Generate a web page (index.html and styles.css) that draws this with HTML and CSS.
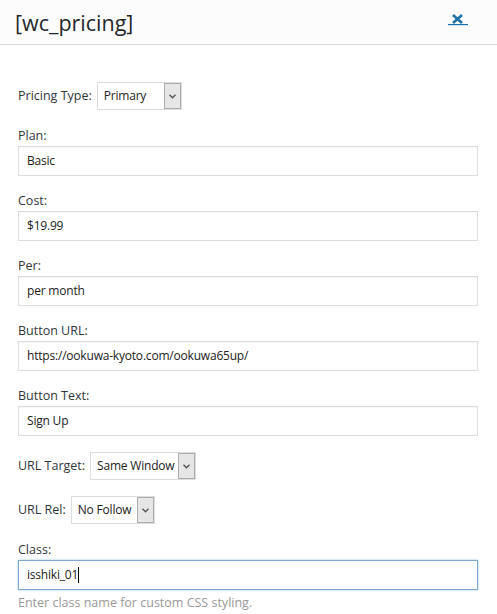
FILE: index.html
```html
<!DOCTYPE html>
<html lang="en">
<head>
<meta charset="utf-8">
<title>[wc_pricing]</title>
<link rel="stylesheet" href="styles.css">
</head>
<body>
<div class="dialog">
  <header class="dialog-header">
    <h1 class="dialog-title">[wc_pricing]</h1>
    <a class="close" href="#" aria-label="Close">
      <svg width="20" height="12" viewBox="0 0 20 12"><path d="M5 1 L14 9 M14 1 L5 9" stroke="#1f6fa8" stroke-width="2.6" fill="none"/><rect x="0" y="10" width="20" height="1.2" fill="#1f6fa8"/></svg>
    </a>
  </header>
  <form class="form">
    <div class="row-inline row-first">
      <label class="inline-label">Pricing Type:</label>
      <div class="select sel-type">
        <span class="select-value">Primary</span>
        <span class="select-arrow"><svg width="7" height="5" viewBox="0 0 7 5"><path d="M0.5 0.8 L3.5 3.8 L6.5 0.8" stroke="#555" stroke-width="1.4" fill="none"/></svg></span>
      </div>
    </div>
    <div class="field">
      <label class="label">Plan:</label>
      <div class="input">Basic</div>
    </div>
    <div class="field">
      <label class="label">Cost:</label>
      <div class="input">$19.99</div>
    </div>
    <div class="field">
      <label class="label">Per:</label>
      <div class="input">per month</div>
    </div>
    <div class="field">
      <label class="label">Button URL:</label>
      <div class="input">https://ookuwa-kyoto.com/ookuwa65up/</div>
    </div>
    <div class="field">
      <label class="label">Button Text:</label>
      <div class="input">Sign Up</div>
    </div>
    <div class="row-inline">
      <label class="inline-label">URL Target:</label>
      <div class="select sel-target">
        <span class="select-value">Same Window</span>
        <span class="select-arrow"><svg width="7" height="5" viewBox="0 0 7 5"><path d="M0.5 0.8 L3.5 3.8 L6.5 0.8" stroke="#555" stroke-width="1.4" fill="none"/></svg></span>
      </div>
    </div>
    <div class="row-inline row-rel">
      <label class="inline-label">URL Rel:</label>
      <div class="select sel-rel">
        <span class="select-value">No Follow</span>
        <span class="select-arrow"><svg width="7" height="5" viewBox="0 0 7 5"><path d="M0.5 0.8 L3.5 3.8 L6.5 0.8" stroke="#555" stroke-width="1.4" fill="none"/></svg></span>
      </div>
    </div>
    <div class="field field-last">
      <label class="label">Class:</label>
      <div class="input input-focus">isshiki_01<span class="caret"></span></div>
      <p class="help">Enter class name for custom CSS styling.</p>
    </div>
  </form>
</div>
</body>
</html>
```
FILE: styles.css
```css
html, body {
  margin: 0;
  padding: 0;
  background: #ffffff;
}
body {
  font-family: "Open Sans", "Noto Sans", sans-serif;
  font-size: 12.5px;
  color: #32373c;
  width: 497px;
  height: 614px;
  overflow: hidden;
}
.dialog-header {
  height: 44px;
  background: #fcfcfc;
  border-bottom: 1px solid #dddddd;
  box-shadow: 0 1px 2px rgba(0,0,0,0.04);
  display: flex;
  align-items: center;
  justify-content: space-between;
  padding: 0 29px 0 15px;
}
.dialog-title {
  margin: 0;
  font-size: 21.5px;
  font-weight: 400;
  color: #23282d;
  line-height: 28px;
  position: relative;
  top: 1px;
}
.close {
  display: block;
  width: 20px;
  height: 12px;
  margin-top: -4px;
}
.close svg { display: block; }
.form {
  padding: 37px 19px 0 18px;
}
.row-inline {
  display: flex;
  align-items: center;
  gap: 5px;
  height: 28px;
  margin-bottom: 17px;
}
.row-rel {
  margin-top: -1px;
}
.inline-label {
  line-height: 18px;
}
.select {
  display: flex;
  height: 26px;
  border: 1px solid #dddddd;
  background: #fff;
  box-sizing: content-box;
  font-size: 12px;
  letter-spacing: -0.2px;
}
.select-value {
  flex: 1;
  padding-left: 6px;
  line-height: 26px;
  color: #222;
  white-space: nowrap;
}
.select-arrow {
  width: 15px;
  border: 1px solid #adadad;
  background: #e6e6e6;
  display: flex;
  align-items: center;
  justify-content: center;
}
.sel-type { width: 83px; }
.sel-target { width: 104px; }
.sel-rel { width: 82px; }
.field {
  margin-bottom: 16px;
}
.label {
  display: block;
  line-height: 18px;
  margin-bottom: 1px;
}
.input {
  height: 28px;
  border: 1px solid #dddddd;
  box-shadow: inset 0 1px 2px rgba(0,0,0,0.04);
  padding: 0 8px;
  line-height: 28px;
  font-size: 12px;
  letter-spacing: -0.2px;
  color: #222;
  background: #fff;
  white-space: nowrap;
}
.input-focus {
  border-color: #7fa9d3;
  box-shadow: 0 0 2px rgba(30,140,190,0.5);
}
.caret {
  display: inline-block;
  width: 1px;
  height: 16px;
  background: #000;
  vertical-align: -4px;
}
.help {
  margin: 4px 0 0;
  color: #999999;
  line-height: 18px;
}
```
